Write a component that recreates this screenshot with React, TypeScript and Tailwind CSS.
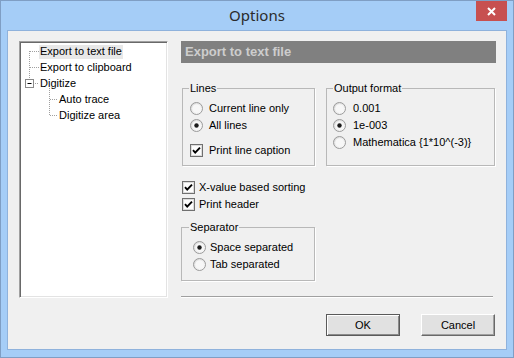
import React from "react";

const ui = { fontFamily: '"Liberation Sans", Arial, sans-serif' };

function Radio({ checked }: { checked?: boolean }) {
  return (
    <svg width="13" height="13" viewBox="0 0 13 13" className="shrink-0">
      <defs>
        <linearGradient id="rg" x1="0" y1="0" x2="1" y2="1">
          <stop offset="0" stopColor="#d6d6d6" />
          <stop offset="1" stopColor="#ffffff" />
        </linearGradient>
      </defs>
      <circle cx="6.5" cy="6.5" r="6" fill="url(#rg)" stroke="#9a9a9a" strokeWidth="1" />
      <circle cx="6.5" cy="6.5" r="4.3" fill="#f7f7f7" />
      {checked && <circle cx="6.5" cy="6.5" r="2.2" fill="#1b1b1b" />}
    </svg>
  );
}

function Check({ checked }: { checked?: boolean }) {
  return (
    <svg width="13" height="13" viewBox="0 0 13 13" className="shrink-0">
      <rect x="0.5" y="0.5" width="12" height="12" fill="#f4f4f4" stroke="#707070" />
      <rect x="1.5" y="1.5" width="10" height="10" fill="#fdfdfd" stroke="#dcdcdc" />
      {checked && (
        <path d="M3 6.2 L5.2 8.6 L10 3.6" fill="none" stroke="#000" strokeWidth="1.9" />
      )}
    </svg>
  );
}

function Row({ children, kind, checked, gap = "gap-[6px]" }: { children: React.ReactNode; kind: "radio" | "check"; checked?: boolean; gap?: string }) {
  return (
    <div className={`flex items-center h-[17px] ${gap}`}>
      {kind === "radio" ? <Radio checked={checked} /> : <Check checked={checked} />}
      <span className="text-[11px] leading-[13px] text-black whitespace-nowrap">{children}</span>
    </div>
  );
}

function TreeLines() {
  return (
    <svg className="absolute inset-0 pointer-events-none" width="147" height="255">
      <g stroke="#a0a0a0" strokeWidth="1" strokeDasharray="1 1" fill="none">
        <line x1="9.5" y1="9" x2="9.5" y2="36" />
        <line x1="10" y1="9.5" x2="19" y2="9.5" />
        <line x1="10" y1="25.5" x2="19" y2="25.5" />
        <line x1="15" y1="41.5" x2="19" y2="41.5" />
        <line x1="29.5" y1="46" x2="29.5" y2="73" />
        <line x1="30" y1="57.5" x2="38" y2="57.5" />
        <line x1="30" y1="73.5" x2="38" y2="73.5" />
      </g>
      <rect x="5.5" y="37.5" width="8" height="8" fill="#fff" stroke="#8a8a8a" />
      <line x1="7.5" y1="41.5" x2="11.5" y2="41.5" stroke="#000" />
    </svg>
  );
}

export default function App() {
  return (
    <div className="w-[514px] h-[358px] relative flex flex-col bg-[#a5cdf7] border border-[#7f9ec4]" style={ui}>
      <div className="h-[29px] flex items-center justify-center">
        <span className="text-[15px] text-[#2b2b2b]" style={{ fontFamily: '"Noto Sans", "Open Sans", sans-serif' }}>
          Options
        </span>
      </div>
      <div className="absolute top-0 right-[6px] w-[31px] h-[20px] bg-[#c75050] flex items-center justify-center">
        <svg width="9" height="9" viewBox="0 0 9 9">
          <path d="M1 1 L8 8 M8 1 L1 8" stroke="#fff" strokeWidth="2" />
        </svg>
      </div>

      <div className="flex-1 mx-[6px] mb-[7px] border border-[#8fb2dc] bg-[#f0f0f0] flex flex-col pt-[10px] pl-[11px]">
        <div className="flex gap-[13px]">
          <div className="w-[149px] h-[257px] bg-white relative border border-t-[#a0a0a0] border-l-[#a0a0a0] border-r-[#ffffff] border-b-[#ffffff] shadow-[inset_1px_1px_0_#696969,inset_-1px_-1px_0_#e3e3e3]">
            <TreeLines />
            <div className="relative pt-[3px] text-[11px] leading-[13px] text-black">
              <div className="h-[16px] pl-[19px]">
                <span className="inline-block bg-[#e8e8e8] px-[1px] h-[14px]">Export to text file</span>
              </div>
              <div className="h-[16px] pl-[20px]">Export to clipboard</div>
              <div className="h-[16px] pl-[20px]">Digitize</div>
              <div className="h-[16px] pl-[39px]">Auto trace</div>
              <div className="h-[16px] pl-[39px]">Digitize area</div>
            </div>
          </div>

          <div className="w-[315px] h-[257px] flex flex-col">
            <div className="h-[22px] bg-[#808080] flex items-center pl-[4px]">
              <span className="text-[13px] font-bold text-[#cdcdcd]">Export to text file</span>
            </div>

            <div className="flex mt-[19px] gap-[11px]">
              <fieldset className="ml-[1px] w-[133px] h-[84px] border border-[#b8b8b8] shadow-[1px_1px_0_#fff] pl-[7px]">
                <legend className="text-[11px] leading-[13px] px-[1px] -ml-[1px]">Lines</legend>
                <div className="mt-[5px]">
                  <Row kind="radio">Current line only</Row>
                  <Row kind="radio" checked>All lines</Row>
                </div>
                <div className="mt-[8px]">
                  <Row kind="check" checked>Print line caption</Row>
                </div>
              </fieldset>
              <fieldset className="w-[169px] h-[84px] border border-[#b8b8b8] shadow-[1px_1px_0_#fff] pl-[6px]">
                <legend className="text-[11px] leading-[13px] px-[1px]">Output format</legend>
                <div className="mt-[5px]">
                  <Row kind="radio" gap="gap-[7px]">0.001</Row>
                  <Row kind="radio" gap="gap-[7px]" checked>1e-003</Row>
                  <Row kind="radio" gap="gap-[7px]">Mathematica {"{1*10^(-3)}"}</Row>
                </div>
              </fieldset>
            </div>

            <div className="mt-[13px] ml-[1px]">
              <Row kind="check" checked gap="gap-[4px]">X-value based sorting</Row>
              <Row kind="check" checked gap="gap-[4px]">Print header</Row>
            </div>

            <fieldset className="mt-[8px] w-[134px] h-[60px] border border-[#b8b8b8] shadow-[1px_1px_0_#fff] pl-[11px]">
              <legend className="text-[11px] leading-[13px] px-[1px] -ml-[4px]">Separator</legend>
              <div className="mt-[5px]">
                <Row kind="radio" gap="gap-[4px]" checked>Space separated</Row>
                <Row kind="radio" gap="gap-[4px]">Tab separated</Row>
              </div>
            </fieldset>

            <div className="mt-auto w-[312px] h-[2px] border-t border-[#a0a0a0] border-b border-b-white" />
          </div>
        </div>

        <div className="flex justify-end gap-[21px] pr-[11px] mt-[16px]">
          <button className="w-[74px] h-[22px] bg-[#e1e1e1] border border-[#5a5a5a] shadow-[inset_1px_1px_0_#fff,inset_-1px_-1px_0_#8a8a8a] text-[11px] text-black">
            OK
          </button>
          <button className="w-[74px] h-[22px] bg-[#e1e1e1] border border-t-[#ffffff] border-l-[#ffffff] border-r-[#696969] border-b-[#696969] shadow-[inset_-1px_-1px_0_#a0a0a0] text-[11px] text-black">
            Cancel
          </button>
        </div>
      </div>
    </div>
  );
}
